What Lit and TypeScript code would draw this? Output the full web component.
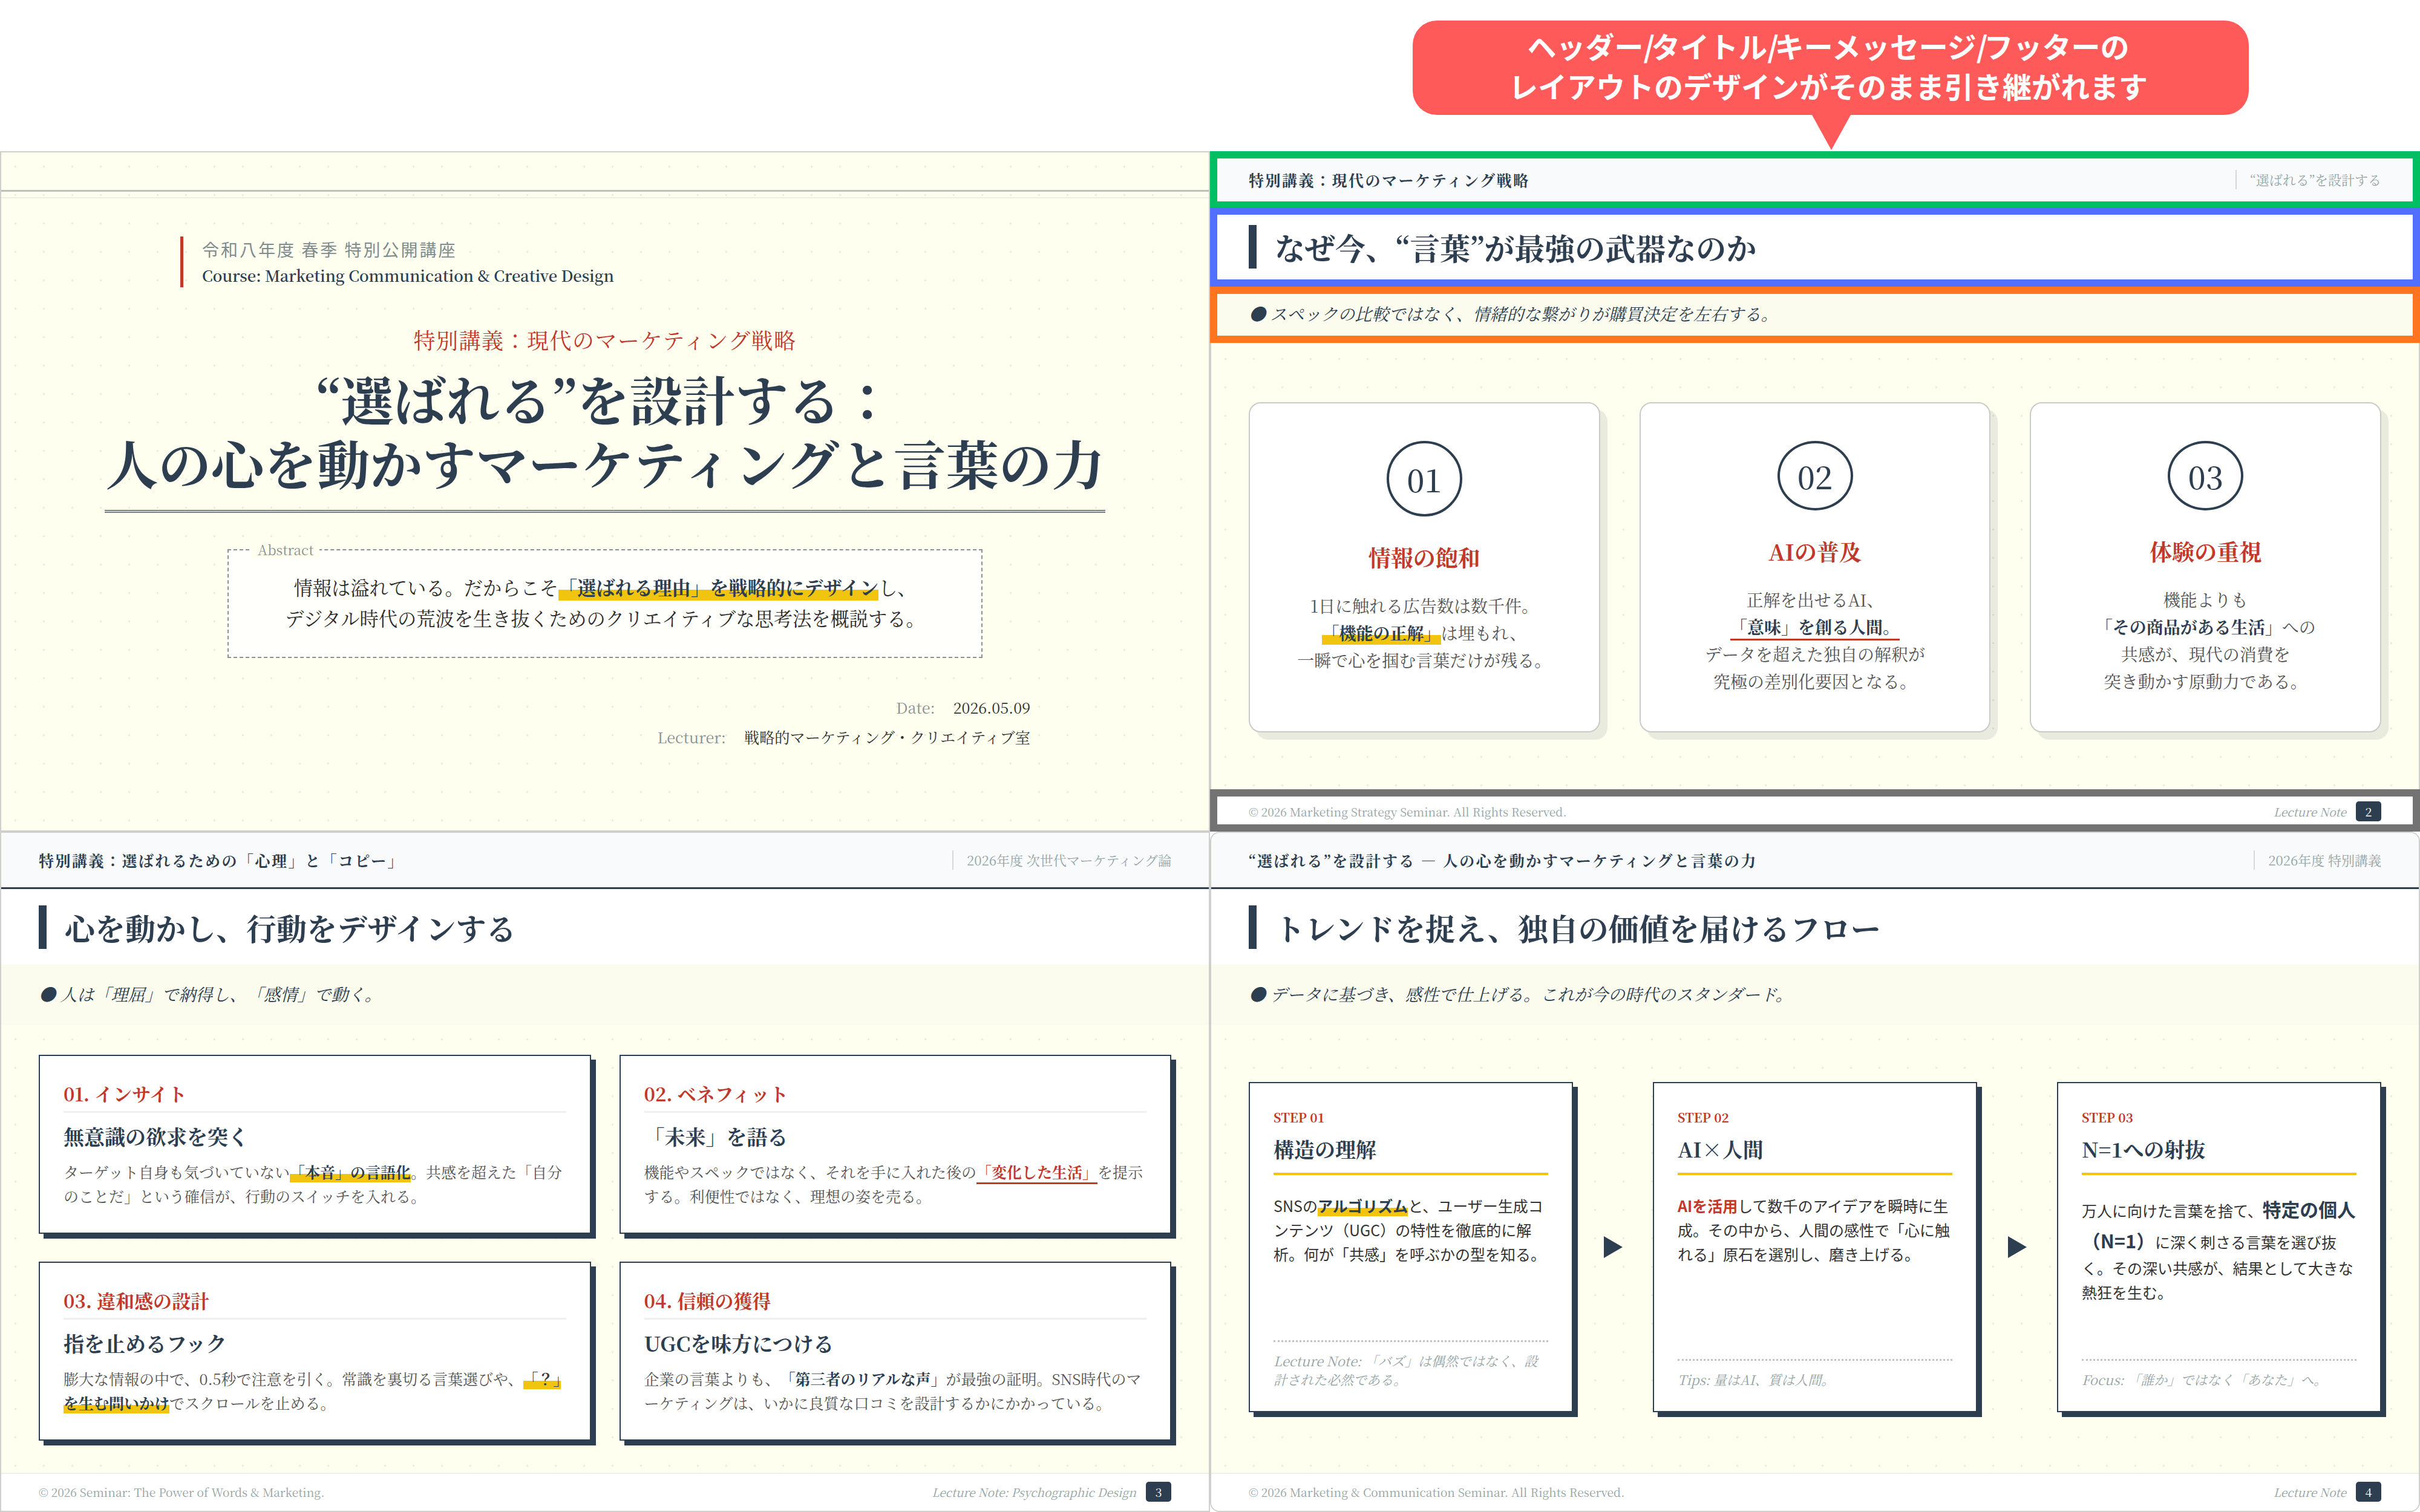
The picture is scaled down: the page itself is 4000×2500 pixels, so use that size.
import { LitElement, html, css, TemplateResult } from "lit";
import { customElement } from "lit/decorators.js";

const hl = (t: string) => html`<strong class="hl">${t}</strong>`;
const ul = (t: string) => html`<strong class="ul">${t}</strong>`;
const b = (t: string) => html`<strong>${t}</strong>`;
const red = (t: string) => html`<strong class="red">${t}</strong>`;

function chrome(head: string, side: string, foot: string, note: string, page: number, title: string, key: string, body: TemplateResult) {
  return html`<section class="slide inner">
    <header class="head"><span class="head-l">${head}</span><span class="head-r">${side}</span></header>
    <h2 class="title"><span class="bar"></span>${title}</h2>
    <div class="key">● ${key}</div>
    <div class="body">${body}</div>
    <footer class="foot"><span>${foot}</span><span class="foot-r"><em>${note}</em><b class="page">${page}</b></span></footer>
  </section>`;
}

@customElement("app-root")
export class AppRoot extends LitElement {
  static styles = css`
    :host {
      display: block;
      width: 4000px;
      height: 2500px;
      background: #fff;
      font-family: "Noto Serif CJK JP", "Noto Serif JP", "Liberation Serif", "Noto Sans CJK JP", serif;
      color: #2c3e50;
      text-spacing-trim: space-all;
      --navy: #2c3e50;
      --red: #c0392b;
      --yellow: #f1c40f;
      --paper: #feffef;
    }
    * { box-sizing: border-box; }
    .top { height: 250px; display: flex; justify-content: flex-end; }
    .callout {
      position: relative;
      margin: 34px 283px 0 0;
      width: 1382px;
      height: 156px;
      border-radius: 40px;
      background: #ff5a5a;
      color: #fff;
      font: 700 48px/66px "Noto Sans CJK JP", sans-serif;
      text-align: center;
      padding: 8px 8px 0 0;
    }
    .callout i { font-style: normal; letter-spacing: -6px; }
    .callout::after {
      content: "";
      position: absolute;
      left: 660px;
      top: 156px;
      border-left: 32px solid transparent;
      border-right: 32px solid transparent;
      border-top: 58px solid #ff5a5a;
    }
    .grid { display: grid; grid-template-columns: 2000px 2000px; grid-auto-rows: 1125px; }
    .slide {
      position: relative;
      height: 1125px;
      border: 2px solid #cfcfcc;
      background-color: var(--paper);
      background-image: radial-gradient(circle, #ecedde 1.6px, transparent 2px);
      background-size: 47px 47px;
      display: flex;
      flex-direction: column;
      overflow: hidden;
    }
    .inner:last-child { border-radius: 16px; }
    .s1-rule { flex: none; margin-top: 62px; height: 14px; border-top: 3px solid #bcc2bb; border-bottom: 2px solid #eeefe3; }
    .s1-course { margin: 63px 0 0 296px; border-left: 5px solid var(--red); padding-left: 31px; height: 84px; }
    .s1-course div:first-child { font: 400 28px/42px "Noto Sans CJK JP", sans-serif; letter-spacing: 3px; color: #7f8c8d; }
    .s1-course div:last-child { font-size: 25.5px; line-height: 44px; font-weight: 600; }
    .s1-main { text-align: center; }
    .s1-sub { margin: 62px 0 0; font-size: 36px; line-height: 50px; letter-spacing: 1.5px; color: var(--red); }
    .s1-title { margin: 18px auto 0; width: 1654px; white-space: nowrap; font-size: 87.4px; line-height: 106px; font-weight: 700; border-bottom: 5px double rgba(44, 62, 80, 0.65); padding-bottom: 26px; }
    .abstract { position: relative; margin: 60px 0 0 374px; width: 1248px; height: 180px; border: 2px dashed #8a9293; background: #fffffb; text-align: center; font-size: 31.25px; line-height: 51px; color: #2b2b2b; padding-top: 35px; }
    .abstract i { position: absolute; left: 38px; top: -17px; padding: 0 10px; background: var(--paper); font-style: normal; font-size: 22.5px; line-height: 30px; color: #8a9293; }
    .meta { margin: 57px 295px 0 0; text-align: right; font-size: 25.2px; line-height: 49px; color: #333; }
    .meta span { color: #8a9293; margin-right: 30px; }
    .hl { background: linear-gradient(transparent 60%, var(--yellow) 60%); color: #2c3e50; }
    .hl-end { display: inline-block; width: 62px; line-height: 36px; white-space: nowrap; }
    .ul { border-bottom: 3px solid var(--red); }
    strong { font-weight: 700; color: var(--navy); }
    strong.red { color: var(--red); }
    .inner { background-image: none; background-color: #fff; }
    .head { flex: none; height: 93px; background: #f8fafb; border-bottom: 3px solid var(--navy); display: flex; align-items: center; justify-content: space-between; padding: 0 62px; }
    .head-l { font-size: 25px; font-weight: 700; letter-spacing: 2.5px; }
    .head-r { font-size: 22px; color: #95a5a6; border-left: 2px solid #d5d9da; padding-left: 22px; line-height: 32px; }
    .title { flex: none; height: 125px; margin: 0; padding: 27px 62px 0; display: flex; font-size: 50px; line-height: 72px; font-weight: 700; background: #fff; }
    .bar { width: 13px; height: 72px; background: var(--navy); margin-right: 30px; }
    .key { flex: none; height: 100px; background: #fbfcee; padding: 28px 62px 0; font-size: 28px; line-height: 40px; font-style: italic; }
    .body { flex: 1; min-height: 0; background-color: var(--paper); background-image: radial-gradient(circle, #ecedde 1.6px, transparent 2px); background-size: 47px 47px; padding: 0 62px; display: flex; }
    .foot { flex: none; height: 63px; background: #fff; border-top: 2px solid #eceef0; display: flex; align-items: center; justify-content: space-between; padding: 0 62px 2px; font-size: 19.2px; color: #95a5a6; }
    .foot-r { display: flex; align-items: center; gap: 16px; }
    .page { width: 42px; height: 33px; border-radius: 5px; background: var(--navy); color: #fff; font-size: 20px; font-weight: 400; display: flex; align-items: center; justify-content: center; }
    .three { flex: 1; display: flex; gap: 65px; padding-top: 95px; align-items: flex-start; }
    .c3 { flex: 1; height: 546px; background: #fff; border: 2px solid #c9cbc9; border-radius: 20px; box-shadow: 12px 12px 0 rgba(44,62,80,.1); padding: 62px 40px 60px; display: flex; flex-direction: column; align-items: center; text-align: center; }
    .num { width: 125px; height: 125px; border: 4px solid var(--navy); border-radius: 50%; display: flex; align-items: center; justify-content: center; font-size: 52px; font-weight: 500; }
    .c3 h3 { margin: 39px 0 0; font-size: 37px; line-height: 56px; color: var(--red); }
    .c3 p { margin: 30px 0 0; font-size: 28px; line-height: 45px; color: #555; }
    .four { flex: 1; display: grid; grid-template-columns: 1fr 1fr; gap: 46px 47px; padding-top: 49px; grid-auto-rows: 296px; }
    .c4 { background: #fff; border: 2px solid var(--navy); box-shadow: 8px 8px 0 var(--navy); padding: 40px 39px; }
    .c4 h3 { margin: 0; font-size: 31px; line-height: 44px; color: var(--red); font-weight: 700; border-bottom: 3px solid #eef0f1; padding-bottom: 7px; }
    .c4 h4 { margin: 0 0 10px; padding-top: 11px; font-size: 34px; line-height: 56px; }
    .c4 p { margin: 0; font-size: 25px; line-height: 40px; color: #555; }
    .flow { flex: 1; display: flex; align-items: flex-start; padding-top: 94px; }
    .c { flex: 1; min-width: 0; height: 546px; background: #fff; border: 2px solid var(--navy); box-shadow: 8px 8px 0 var(--navy); padding: 38px 39px 37px; display: flex; flex-direction: column; }
    .c small { font-size: 21px; font-weight: 700; color: var(--red); line-height: 36px; }
    .c h3 { margin: 8px 0 0; font-size: 34px; line-height: 54px; border-bottom: 4px solid var(--yellow); padding-bottom: 12px; font-weight: 700; }
    .c p { margin: 30px 0 0; flex: 1; font: 25px/1.6 "Noto Sans CJK JP", sans-serif; color: #333; }
    .c p .big { font-size: 30.8px; line-height: 1.68; }
    .c .note { border-top: 3px dotted #c0c4c5; padding-top: 15px; font-size: 22px; line-height: 31px; font-style: italic; color: #95a5a6; }
    .tri { width: 132px; flex: none; display: flex; align-items: center; justify-content: center; height: 546px; }
    .tri i { border-left: 31px solid var(--navy); border-top: 18px solid transparent; border-bottom: 18px solid transparent; }
    .guide { position: absolute; left: 2000px; width: 2000px; border: 12px solid; pointer-events: none; }
    .g-head { top: 250px; height: 95px; border-color: #00bf63; }
    .g-title { top: 343px; height: 131px; border-color: #5170ff; }
    .g-key { top: 474px; height: 93px; border-color: #ff751f; }
    .g-foot { top: 1305px; height: 70px; border-color: #737373; }
  `;

  render() {
    return html`
      <div class="top"><div class="callout">ヘッダー<i>/</i>タイトル<i>/</i>キーメッセージ<i>/</i>フッターの<br />レイアウトのデザインがそのまま引き継がれます</div></div>
      <div class="grid">
        <section class="slide">
          <div class="s1-rule"></div>
          <div class="s1-course"><div>令和八年度 春季 特別公開講座</div><div>Course: Marketing Communication &amp; Creative Design</div></div>
          <div class="s1-main">
            <div class="s1-sub">特別講義：現代のマーケティング戦略</div>
            <div class="s1-title">“選ばれる”を設計する：<br />人の心を動かすマーケティングと言葉の力</div>
          </div>
          <div class="abstract"><i>Abstract</i>情報は溢れている。だからこそ${hl("「選ばれる理由」を戦略的にデザイン")}し、<br />デジタル時代の荒波を生き抜くためのクリエイティブな思考法を概説する。</div>
          <div class="meta"><div><span>Date:</span>2026.05.09</div><div><span>Lecturer:</span>戦略的マーケティング・クリエイティブ室</div></div>
        </section>

        ${chrome("特別講義：現代のマーケティング戦略", "“選ばれる”を設計する", "© 2026 Marketing Strategy Seminar. All Rights Reserved.", "Lecture Note", 2,
          "なぜ今、“言葉”が最強の武器なのか", "スペックの比較ではなく、情緒的な繋がりが購買決定を左右する。",
          html`<div class="three">
            <div class="c3"><div class="num">01</div><h3>情報の飽和</h3><p>1日に触れる広告数は数千件。<br />${hl("「機能の正解」")}は埋もれ、<br />一瞬で心を掴む言葉だけが残る。</p></div>
            <div class="c3"><div class="num">02</div><h3>AIの普及</h3><p>正解を出せるAI、<br />${ul("「意味」を創る人間。")}<br />データを超えた独自の解釈が<br />究極の差別化要因となる。</p></div>
            <div class="c3"><div class="num">03</div><h3>体験の重視</h3><p>機能よりも<br />${b("「その商品がある生活」")}への<br />共感が、現代の消費を<br />突き動かす原動力である。</p></div>
          </div>`)}

        ${chrome("特別講義：選ばれるための「心理」と「コピー」", "2026年度 次世代マーケティング論", "© 2026 Seminar: The Power of Words & Marketing.", "Lecture Note: Psychographic Design", 3,
          "心を動かし、行動をデザインする", "人は「理屈」で納得し、「感情」で動く。",
          html`<div class="four">
            <div class="c4"><h3>01. インサイト</h3><h4>無意識の欲求を突く</h4><p>ターゲット自身も気づいていない${hl("「本音」の言語化")}。共感を超えた「自分のことだ」という確信が、行動のスイッチを入れる。</p></div>
            <div class="c4"><h3>02. ベネフィット</h3><h4>「未来」を語る</h4><p>機能やスペックではなく、それを手に入れた後の<strong class="ul red">「変化した生活」</strong>を提示する。利便性ではなく、理想の姿を売る。</p></div>
            <div class="c4"><h3>03. 違和感の設計</h3><h4>指を止めるフック</h4><p>膨大な情報の中で、0.5秒で注意を引く。常識を裏切る言葉選びや、<strong class="hl hl-end">「？」</strong>${hl("を生む問いかけ")}でスクロールを止める。</p></div>
            <div class="c4"><h3>04. 信頼の獲得</h3><h4>UGCを味方につける</h4><p>企業の言葉よりも、${b("「第三者のリアルな声」")}が最強の証明。SNS時代のマーケティングは、いかに良質な口コミを設計するかにかかっている。</p></div>
          </div>`)}

        ${chrome("“選ばれる”を設計する ― 人の心を動かすマーケティングと言葉の力", "2026年度 特別講義", "© 2026 Marketing & Communication Seminar. All Rights Reserved.", "Lecture Note", 4,
          "トレンドを捉え、独自の価値を届けるフロー", "データに基づき、感性で仕上げる。これが今の時代のスタンダード。",
          html`<div class="flow">
            <div class="c"><small>STEP 01</small><h3>構造の理解</h3><p>SNSの${hl("アルゴリズム")}と、ユーザー生成コンテンツ（UGC）の特性を徹底的に解析。何が「共感」を呼ぶかの型を知る。</p><div class="note">Lecture Note: 「バズ」は偶然ではなく、設計された必然である。</div></div>
            <div class="tri"><i></i></div>
            <div class="c"><small>STEP 02</small><h3>AI×人間</h3><p>${red("AIを活用")}して数千のアイデアを瞬時に生成。その中から、人間の感性で「心に触れる」原石を選別し、磨き上げる。</p><div class="note">Tips: 量はAI、質は人間。</div></div>
            <div class="tri"><i></i></div>
            <div class="c"><small>STEP 03</small><h3>N=1への射抜</h3><p>万人に向けた言葉を捨て、<strong class="big">特定の個人（N=1）</strong>に深く刺さる言葉を選び抜く。その深い共感が、結果として大きな熱狂を生む。</p><div class="note">Focus: 「誰か」ではなく「あなた」へ。</div></div>
          </div>`)}
      </div>
      <div class="guide g-head"></div>
      <div class="guide g-title"></div>
      <div class="guide g-key"></div>
      <div class="guide g-foot"></div>
    `;
  }
}
